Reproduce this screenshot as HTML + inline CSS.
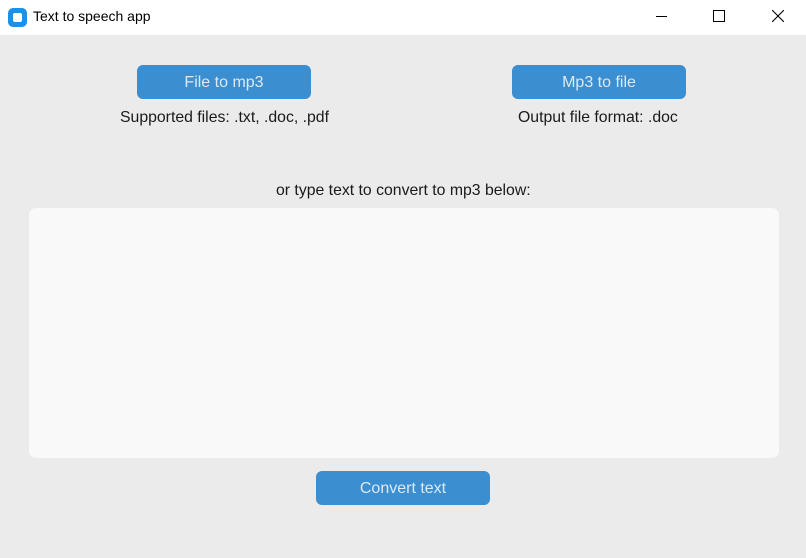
<!DOCTYPE html>
<html><head><style>
body{margin:0;width:806px;height:558px;background:#ebebeb;font-family:"Liberation Sans",sans-serif;position:relative;overflow:hidden}
.tb{position:absolute;left:0;top:0;width:806px;height:35px;background:#fff}
.t{position:absolute;font-size:15.8px;color:#1a1a1a;white-space:nowrap}
.btn{position:absolute;width:174px;height:34px;background:#3b8ed0;border-radius:6px;color:#dce9f5;font-size:16px;text-align:center;line-height:35px}
</style></head><body>
<div class="tb">
<div style="position:absolute;left:8px;top:8px;width:19px;height:19px;background:#1e90e8;border-radius:5px"><div style="position:absolute;left:5px;top:5px;width:9px;height:9px;background:#fff;border-radius:2px"></div></div>
<div class="t" style="left:33px;top:8px;font-size:14px;color:#000">Text to speech app</div>
<div style="position:absolute;left:656px;top:16px;width:11px;height:1px;background:#000"></div>
<div style="position:absolute;left:713px;top:10px;width:10px;height:10px;border:1px solid #000"></div>
<svg style="position:absolute;left:772px;top:10px" width="12" height="12"><path d="M0 0L12 12M12 0L0 12" stroke="#000" stroke-width="1.1"/></svg>
</div>
<div class="btn" style="left:137px;top:65px">File to mp3</div>
<div class="btn" style="left:512px;top:65px">Mp3 to file</div>
<div class="t" style="left:120px;top:109px">Supported files: .txt, .doc, .pdf</div>
<div class="t" style="left:518px;top:109px">Output file format: .doc</div>
<div class="t" style="left:276px;top:182px">or type text to convert to mp3 below:</div>
<div style="position:absolute;left:29px;top:208px;width:750px;height:250px;background:#f9f9f9;border-radius:7px"></div>
<div class="btn" style="left:316px;top:471px">Convert text</div>
</body></html>
